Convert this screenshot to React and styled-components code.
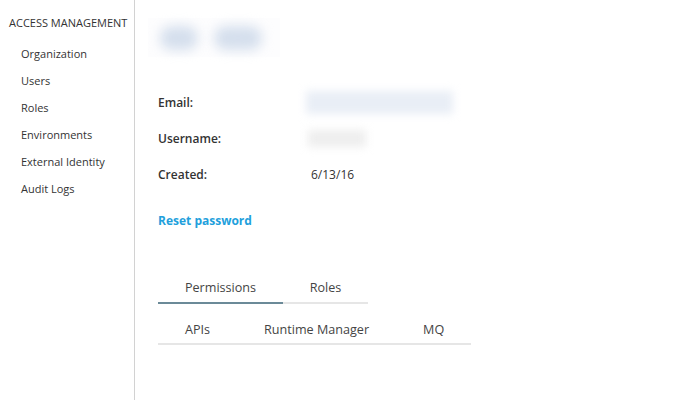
import React from 'react';
import styled, { createGlobalStyle } from 'styled-components';

const GlobalStyle = createGlobalStyle`
  html, body {
    margin: 0;
    padding: 0;
    background: #fff;
  }
  body {
    font-family: "Open Sans", "Liberation Sans", sans-serif;
    color: #333;
  }
`;

const Page = styled.div`
  display: flex;
  width: 681px;
  height: 403px;
  overflow: hidden;
`;

const Sidebar = styled.nav`
  width: 135px;
  height: 400px;
  border-right: 1px solid #d2d2d2;
  padding-top: 15px;
  box-sizing: border-box;
  flex-shrink: 0;
`;

const SideTitle = styled.div`
  font-size: 11px;
  line-height: 16px;
  padding-left: 9px;
  color: #333;
  text-transform: uppercase;
  white-space: nowrap;
`;

const SideList = styled.ul`
  list-style: none;
  margin: 9px 0 0;
  padding: 0;
`;

const SideItem = styled.li`
  font-size: 11px;
  line-height: 27px;
  padding-left: 21px;
  color: #333;
`;

const Main = styled.main`
  flex: 1;
  padding: 18px 0 0 23px;
`;

const Heading = styled.div`
  display: flex;
  gap: 16px;
  align-items: center;
  width: 132px;
  height: 39px;
  margin-left: -10px;
  padding-left: 12px;
  box-sizing: border-box;
  background: #fdfdfe;
`;

const Blob = styled.span`
  display: block;
  width: ${p => p.w}px;
  height: 24px;
  border-radius: 12px;
  background: #d5dfed;
  filter: blur(6px);
`;

const Fields = styled.dl`
  display: grid;
  grid-template-columns: 153px auto;
  grid-auto-rows: 36px;
  align-items: center;
  margin: 27px 0 0;
`;

const Label = styled.dt`
  font-size: 12px;
  font-weight: 600;
  color: #333;
`;

const Value = styled.dd`
  margin: 0;
  font-size: 12px;
  color: #333;
`;

const Redacted = styled.span`
  display: block;
  width: ${p => p.w}px;
  height: ${p => p.h}px;
  margin-left: ${p => p.x || 0}px;
  background: ${p => p.tone};
  filter: blur(4px);
`;

const ResetLink = styled.a`
  display: inline-block;
  margin-top: 20px;
  font-size: 12px;
  font-weight: 700;
  color: #229fdc;
  text-decoration: none;
`;

const Tabs = styled.div`
  display: flex;
  margin-top: 49px;
`;

const Tab = styled.div`
  width: ${p => p.w}px;
  text-align: center;
  font-size: 12.6px;
  line-height: 18px;
  padding-bottom: 5px;
  color: #444;
  border-bottom: 2px solid ${p => (p.active ? '#6b8a98' : '#e6e6e6')};
`;

const SubTabs = styled.div`
  display: inline-flex;
  margin-top: 17px;
  border-bottom: 2px solid #e6e6e6;
`;

const SubTab = styled.div`
  padding: 0 27px 4px;
  font-size: 12.6px;
  line-height: 18px;
  color: #444;
  white-space: nowrap;
`;

const items = ['Organization', 'Users', 'Roles', 'Environments', 'External Identity', 'Audit Logs'];

export default function App() {
  return (
    <Page>
      <GlobalStyle />
      <Sidebar>
        <SideTitle>Access Management</SideTitle>
        <SideList>
          {items.map(item => <SideItem key={item}>{item}</SideItem>)}
        </SideList>
      </Sidebar>
      <Main>
        <Heading>
          <Blob w={38} />
          <Blob w={48} />
        </Heading>
        <Fields>
          <Label>Email:</Label>
          <Value><Redacted w={147} h={23} x={-5} tone="#e9eef6" /></Value>
          <Label>Username:</Label>
          <Value><Redacted w={58} h={17} x={-3} tone="#eeeeee" /></Value>
          <Label>Created:</Label>
          <Value>6/13/16</Value>
        </Fields>
        <ResetLink href="#">Reset password</ResetLink>
        <Tabs>
          <Tab w={125} active>Permissions</Tab>
          <Tab w={85}>Roles</Tab>
        </Tabs>
        <SubTabs>
          <SubTab>APIs</SubTab>
          <SubTab>Runtime Manager</SubTab>
          <SubTab>MQ</SubTab>
        </SubTabs>
      </Main>
    </Page>
  );
}
